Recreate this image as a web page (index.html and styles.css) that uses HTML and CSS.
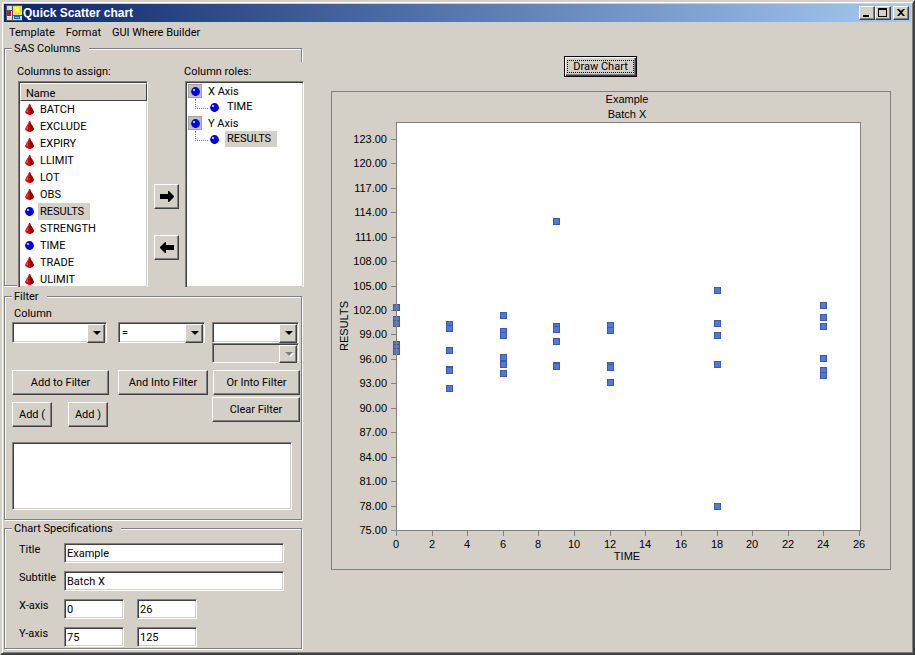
FILE: index.html
```html
<!DOCTYPE html>
<html lang="en">
  <head>
    <meta charset="UTF-8" />
    <title>Quick Scatter chart</title>
    <link rel="stylesheet" href="styles.css">
  </head>
  <body>
    <svg class="sprites" width="0" height="0" aria-hidden="true">
      <symbol id="cone" viewBox="0 0 9 11">
        <path d="M4 0h1l1 3 1 1 2 4-1 1.500L5 11H4L1 9.500 0 8l2-4 1-1z" fill="#e00000" />
        <path d="M5 0l1 3 1 1 2 4-1 1.500L5 11z" fill="#8a0000" />
        <path d="M3 4L1 8h2z" fill="#ff5040" />
      </symbol>
      <symbol id="ball" viewBox="0 0 9 9">
        <circle cx="4.500" cy="4.500" r="4.400" fill="#0000f0" />
        <path d="M8.500 4A4.200 4.200 0 0 1 2.500 8.300 6 6 0 0 0 8.500 4z" fill="#000090" />
        <rect x="2" y="2" width="2" height="2" fill="#b8c8ff" />
      </symbol>
      <symbol id="arrow" viewBox="0 0 14 11">
        <path d="M0 3h8V0h1l5 5v1l-5 5H8V8H0z" />
      </symbol>
    </svg>

    <div class="window">
      <header class="titlebar">
        <svg class="app-icon" width="16" height="16" viewBox="0 0 16 16" shape-rendering="crispEdges">
          <rect width="16" height="16" fill="#d8d8d8" />
          <path d="M0 0h16v1H1v14h15v1H0zM6 1h1v14H6zM1 5h5v1H1zM7 10h9v1H7z" fill="#555" />
          <rect x="1" y="6" width="5" height="6" fill="#fff" />
          <rect x="1" y="6" width="4" height="5" fill="#d8004c" />
          <rect x="8" y="1" width="7" height="8" fill="#f4e800" />
          <rect x="9" y="2" width="4" height="5" fill="#ffff70" />
          <rect x="8" y="11" width="6" height="3" fill="#0070e0" />
          <rect x="9" y="12" width="4" height="1" fill="#30e0ff" />
        </svg>
        <h1>Quick Scatter chart</h1>
        <div class="window-buttons">
          <button type="button" aria-label="Minimize">
            <svg width="12" height="10" viewBox="0 0 12 10"><path d="M2 7h6v2H2z" /></svg>
          </button>
          <button type="button" aria-label="Maximize">
            <svg width="12" height="10" viewBox="0 0 12 10"><path fill-rule="evenodd" d="M1 0h9v9H1zM2 2h7v6H2z" /></svg>
          </button>
          <button type="button" class="close" aria-label="Close">
            <svg width="12" height="10" viewBox="0 0 12 10"><path d="M2 1h2l2 2 2-2h2L7 4.500 10 8H8L6 6 4 8H2l3-3.500z" /></svg>
          </button>
        </div>
      </header>

      <nav class="menu">
        <a href="#">Template</a>
        <a href="#">Format</a>
        <a href="#">GUI Where Builder</a>
      </nav>

      <main>
        <div class="sidebar">
          <fieldset class="columns">
            <legend>SAS Columns</legend>
            <div class="columns-panel">
              <div class="assign">
                <p>Columns to assign:</p>
                <div class="listbox">
                  <table>
                    <thead>
                      <tr><th>Name</th></tr>
                    </thead>
                    <tbody>
                      <tr><td><svg class="cone"><use href="#cone" /></svg><span>BATCH</span></td></tr>
                      <tr><td><svg class="cone"><use href="#cone" /></svg><span>EXCLUDE</span></td></tr>
                      <tr><td><svg class="cone"><use href="#cone" /></svg><span>EXPIRY</span></td></tr>
                      <tr><td><svg class="cone"><use href="#cone" /></svg><span>LLIMIT</span></td></tr>
                      <tr><td><svg class="cone"><use href="#cone" /></svg><span>LOT</span></td></tr>
                      <tr><td><svg class="cone"><use href="#cone" /></svg><span>OBS</span></td></tr>
                      <tr><td><svg class="ball"><use href="#ball" /></svg><span class="selected">RESULTS</span></td></tr>
                      <tr><td><svg class="cone"><use href="#cone" /></svg><span>STRENGTH</span></td></tr>
                      <tr><td><svg class="ball"><use href="#ball" /></svg><span>TIME</span></td></tr>
                      <tr><td><svg class="cone"><use href="#cone" /></svg><span>TRADE</span></td></tr>
                      <tr><td><svg class="cone"><use href="#cone" /></svg><span>ULIMIT</span></td></tr>
                    </tbody>
                  </table>
                </div>
              </div>
              <div class="move">
                <button type="button" aria-label="Assign column"><svg width="14" height="11"><use href="#arrow" /></svg></button>
                <button type="button" aria-label="Remove column"><svg class="flip" width="14" height="11"><use href="#arrow" /></svg></button>
              </div>
              <div class="roles">
                <p>Column roles:</p>
                <ul class="listbox tree">
                  <li>
                    <div class="role"><i><svg class="ball"><use href="#ball" /></svg></i>X Axis</div>
                    <div class="leaf"><svg class="ball"><use href="#ball" /></svg><span>TIME</span></div>
                  </li>
                  <li>
                    <div class="role"><i><svg class="ball"><use href="#ball" /></svg></i>Y Axis</div>
                    <div class="leaf"><svg class="ball"><use href="#ball" /></svg><span class="selected">RESULTS</span></div>
                  </li>
                </ul>
              </div>
            </div>
          </fieldset>

          <fieldset class="filter">
            <legend>Filter</legend>
            <label for="filterColumn">Column</label>
            <div class="filter-row">
              <div class="combo wide">
                <select id="filterColumn"><option></option></select>
              </div>
              <div class="combo">
                <select aria-label="Operator"><option>=</option></select>
              </div>
              <div>
                <div class="combo">
                  <select aria-label="Value"><option></option></select>
                </div>
                <div class="combo disabled">
                  <select aria-label="Second value" disabled><option></option></select>
                </div>
              </div>
            </div>
            <div class="filter-row buttons">
              <button type="button">Add to Filter</button>
              <button type="button">And Into Filter</button>
              <button type="button">Or Into Filter</button>
            </div>
            <div class="bracket-row">
              <button type="button" class="small">Add (</button>
              <button type="button" class="small">Add )</button>
              <button type="button" class="clear">Clear Filter</button>
            </div>
            <textarea aria-label="Filter expression"></textarea>
          </fieldset>

          <fieldset class="specs">
            <legend>Chart Specifications</legend>
            <div class="spec">
              <label for="title">Title</label>
              <input type="text" id="title" value="Example">
            </div>
            <div class="spec">
              <label for="subtitle">Subtitle</label>
              <input type="text" id="subtitle" value="Batch X">
            </div>
            <div class="spec">
              <label for="xMin">X-axis</label>
              <input type="text" class="short" id="xMin" value="0">
              <input type="text" class="short" aria-label="X-axis maximum" value="26">
            </div>
            <div class="spec">
              <label for="yMin">Y-axis</label>
              <input type="text" class="short" id="yMin" value="75">
              <input type="text" class="short" aria-label="Y-axis maximum" value="125">
            </div>
          </fieldset>
        </div>

        <section class="output">
          <div class="draw-row">
            <button type="button" class="draw"><span>Draw Chart</span></button>
          </div>
          <svg id="chart" viewBox="0 0 560 479" role="img" aria-label="Scatter chart of RESULTS by TIME"></svg>
        </section>
      </main>
    </div>

    <script>
      let chart = document.getElementById("chart");

      let results = {
        0: [102.35, 100.85, 100.4, 97.8, 97.4, 96.95],
        3: [100.3, 99.8, 97.1, 94.8, 94.65, 92.45],
        6: [101.4, 99.45, 98.95, 96.25, 95.4, 94.3],
        9: [112.95, 100.05, 99.7, 98.2, 95.25, 95.1],
        12: [100.2, 99.55, 95.2, 95, 93.15],
        18: [104.45, 100.4, 98.95, 95.4, 77.95],
        24: [102.65, 101.15, 100.05, 96.1, 94.65, 94.05]
      };

      let left = 65;
      let top_ = 31;
      let right = 529;
      let bottom = 439;

      function add(tag, attrs, text) {
        let el = document.createElementNS("http://www.w3.org/2000/svg", tag);
        for (let name in attrs) {
          el.setAttribute(name, attrs[name]);
        }
        if (text !== undefined) {
          el.textContent = text;
        }
        chart.appendChild(el);
      }

      function xPos(value) {
        return Math.round(left + value * 17.81);
      }

      function yPos(value) {
        return Math.round(bottom - (value - 75) * 8.15);
      }

      add("rect", { class: "frame", x: 0.5, y: 0.5, width: 559, height: 478 });
      add("rect", { class: "plot", x: left + 0.5, y: top_ + 0.5, width: right - left, height: bottom - top_ });
      add("text", { class: "middle", x: 296, y: 12 }, "Example");
      add("text", { class: "middle", x: 296, y: 27 }, "Batch X");

      for (let v = 75; v <= 123; v += 3) {
        add("rect", { class: "line", x: left - 5, y: yPos(v), width: 5, height: 1 });
        add("text", { class: "end", x: 56, y: yPos(v) + 4 }, v.toFixed(2));
      }

      for (let v = 0; v <= 26; v += 2) {
        add("rect", { class: "line", x: xPos(v), y: bottom, width: 1, height: 6 });
        add("text", { class: "middle", x: xPos(v), y: 457 }, v);
      }

      for (let time in results) {
        for (let value of results[time]) {
          add("rect", { class: "marker", x: xPos(time) - 2.5, y: yPos(value) - 2.5, width: 6, height: 6 });
        }
      }

      // the axis stays visible over the points at time 0
      add("rect", { class: "line", x: left, y: top_, width: 1, height: bottom - top_ });
      add("text", { class: "middle", x: 296, y: 469 }, "TIME");
      add("text", { class: "middle", x: 0, y: 0, transform: "translate(17 235) rotate(-90)" }, "RESULTS");
    </script>
  </body>
</html>
```
FILE: styles.css
```css
* {
  box-sizing: border-box;
}

body {
  margin: 0;
  background: #d4d0c8;
  color: #000;
  font: 11px/13px Roboto, "Liberation Sans", Arial, sans-serif;
}

p, ul, h1 {
  margin: 0;
  padding: 0;
}

button, input, select, textarea {
  font: inherit;
  color: inherit;
  margin: 0;
  border-radius: 0;
}

.sprites {
  position: absolute;
}

.window {
  min-height: 100vh;
  padding: 2px;
  border: 2px solid;
  border-color: #d4d0c8 #404040 #404040 #d4d0c8;
  box-shadow: inset 1px 1px #fff, inset -1px -1px #808080;
}

/* title bar */
.titlebar {
  display: flex;
  align-items: center;
  height: 18px;
  padding: 0 2px;
  background: linear-gradient(to right, #0a246a, #a6caf0);
}

.titlebar h1 {
  flex: 1;
  margin-left: 1px;
  color: #fff;
  font: bold 12px/18px "Liberation Sans", Arial, sans-serif;
}

.window-buttons {
  display: flex;
}

.window-buttons button {
  width: 16px;
  height: 14px;
}

.window-buttons .close {
  margin-left: 2px;
}

.menu {
  display: flex;
  gap: 11px;
  height: 20px;
  padding: 3px 5px 0;
  line-height: 16px;
}

.menu a {
  color: #000;
  text-decoration: none;
}

/* raised and sunken edges */
button {
  display: flex;
  align-items: center;
  justify-content: center;
  padding: 0;
  background: #d4d0c8;
  border: 1px solid;
  border-color: #fff #404040 #404040 #fff;
  box-shadow: inset -1px -1px #808080;
}

.listbox, .combo, textarea, input {
  background: #fff;
  border: 1px solid;
  border-color: #808080 #fff #fff #808080;
  box-shadow: inset 1px 1px #404040, inset -1px -1px #d4d0c8;
}

main {
  display: grid;
  grid-template-columns: 299px 1fr;
}

.sidebar {
  display: flex;
  flex-direction: column;
}

/* etched frame: grey line with a white one beside it */
fieldset {
  min-width: 0;
  margin: 0 1px 1px 0;
  border: 1px solid #808080;
  box-shadow: 1px 1px #fff, inset 1px 1px #fff;
}

legend {
  padding: 0 8px 0 2px;
  background: #d4d0c8;
  line-height: 13px;
}

/* SAS columns */
.columns {
  padding: 7px 0 0 12px;
}

.columns legend {
  margin-left: -5px;
}

.columns-panel {
  display: grid;
  grid-template-columns: 131px 37px 1fr;
  margin: 0 -3px -2px 0;
  padding-top: 3px;
  background: #d4d0c8;
}

.columns-panel p {
  margin-bottom: 3px;
}

.assign .listbox {
  margin-left: 1px;
}

.columns-panel .listbox {
  height: 206px;
  padding: 1px 0 0 1px;
  border-bottom: 0;
  overflow: hidden;
}

.assign table {
  width: 100%;
  border-collapse: separate;
  border-spacing: 0;
}

th {
  height: 18px;
  padding: 2px 5px 0;
  background: #d4d0c8;
  border: 1px solid;
  border-color: #fff #404040 #404040 #fff;
  font-weight: normal;
  text-align: left;
}

td {
  display: flex;
  align-items: center;
  height: 17px;
  padding: 0 0 0 5px;
}

.cone {
  width: 9px;
  height: 11px;
}

.ball {
  width: 9px;
  height: 9px;
}

td span {
  margin-left: 4px;
  padding: 0 2px;
  line-height: 17px;
}

.move {
  display: flex;
  flex-direction: column;
  align-items: center;
  gap: 26px;
  padding-top: 119px;
}

.move button {
  width: 25px;
  height: 25px;
}

.flip {
  transform: scaleX(-1);
}

.roles p {
  margin-left: -1px;
}

.tree {
  list-style: none;
}

.role, .leaf {
  display: flex;
  align-items: center;
  height: 16px;
}

.role i {
  display: flex;
  align-items: center;
  justify-content: center;
  width: 14px;
  height: 14px;
  margin: 0 6px 0 1px;
  background: #c0c0c0;
  border: 1px solid #a0a0a0;
}

.leaf::before {
  content: "";
  align-self: flex-start;
  width: 12px;
  height: 9px;
  margin: 0 2px 0 8px;
  border: 1px dotted #808080;
  border-width: 0 0 1px 1px;
}

.leaf span {
  margin-left: 6px;
  padding: 0 2px;
  line-height: 16px;
}

td .selected, .leaf .selected {
  padding-right: 6px;
  background: #d4d0c8;
}

/* filter */
.filter {
  margin-top: 3px;
  padding: 4px 1px 9px 7px;
}

.filter > label {
  display: block;
  margin: 0 0 2px 2px;
}

.filter-row {
  display: grid;
  grid-template-columns: 106px 94px 1fr;
}

.filter-row button {
  height: 25px;
  width: 97px;
}

.filter-row button:nth-child(2) {
  width: 90px;
}

.filter-row button:nth-child(3) {
  width: 87px;
  justify-self: end;
}

.buttons {
  margin: 7px 0 2px;
}

.combo {
  position: relative;
  width: 87px;
  height: 21px;
  padding: 2px;
}

.combo.wide {
  width: 95px;
}

.combo select {
  display: block;
  width: 100%;
  height: 15px;
  padding: 0 18px 0 1px;
  appearance: none;
  background: transparent;
  border: 0;
  outline: 0;
}

.combo::before {
  content: "";
  position: absolute;
  top: 1px;
  right: 1px;
  width: 16px;
  height: 17px;
  background: #d4d0c8;
  border: 1px solid;
  border-color: #fff #404040 #404040 #fff;
  box-shadow: inset -1px -1px #808080;
  pointer-events: none;
}

.combo::after {
  content: "";
  position: absolute;
  top: 8px;
  right: 5px;
  border: 4px solid transparent;
  border-top-color: #000;
  border-bottom: 0;
  pointer-events: none;
}

.combo.disabled {
  height: 20px;
  background: #d4d0c8;
}

.combo.disabled::before {
  height: 16px;
}

.combo.disabled::after {
  border-top-color: #808080;
  filter: drop-shadow(1px 1px #fff);
}

.bracket-row {
  display: flex;
  align-items: flex-end;
  gap: 16px;
  margin-bottom: 15px;
}

.bracket-row .small {
  width: 40px;
  height: 25px;
}

.bracket-row .clear {
  width: 88px;
  height: 25px;
  margin: 0 0 5px auto;
}

textarea {
  display: block;
  width: 280px;
  height: 68px;
  resize: none;
}

/* chart specifications */
.specs {
  display: flex;
  flex-direction: column;
  gap: 8px;
  margin-top: 1px;
  padding: 8px 17px 1px 14px;
}

.specs legend {
  margin-left: -7px;
}

.spec {
  display: flex;
}

.spec label {
  width: 45px;
}

.spec input {
  flex: 1;
  min-width: 0;
  height: 20px;
  padding: 1px 2px 0;
}

.spec .short {
  flex: none;
  width: 60px;
  margin-right: 13px;
}

/* chart */
.output {
  padding: 14px 20px 0 28px;
}

.draw-row {
  display: flex;
  justify-content: center;
  margin-bottom: 14px;
  padding-right: 21px;
}

.draw {
  width: 73px;
  height: 21px;
  border-color: #000;
  box-shadow: inset 1px 1px #fff, inset -1px -1px #404040, inset -2px -2px #808080;
}

.draw span {
  padding: 0 5px;
  border: 1px dotted #000;
  line-height: 11px;
}

#chart {
  display: block;
  width: 100%;
  font: 11px "Liberation Sans", Arial, sans-serif;
}

.frame {
  fill: none;
  stroke: #808080;
}

.plot {
  fill: #fff;
  stroke: #808080;
}

.line {
  fill: #808080;
}

.marker {
  fill: #5078dc;
  stroke: #3c5aaa;
}

.middle {
  text-anchor: middle;
}

.end {
  text-anchor: end;
}
```
